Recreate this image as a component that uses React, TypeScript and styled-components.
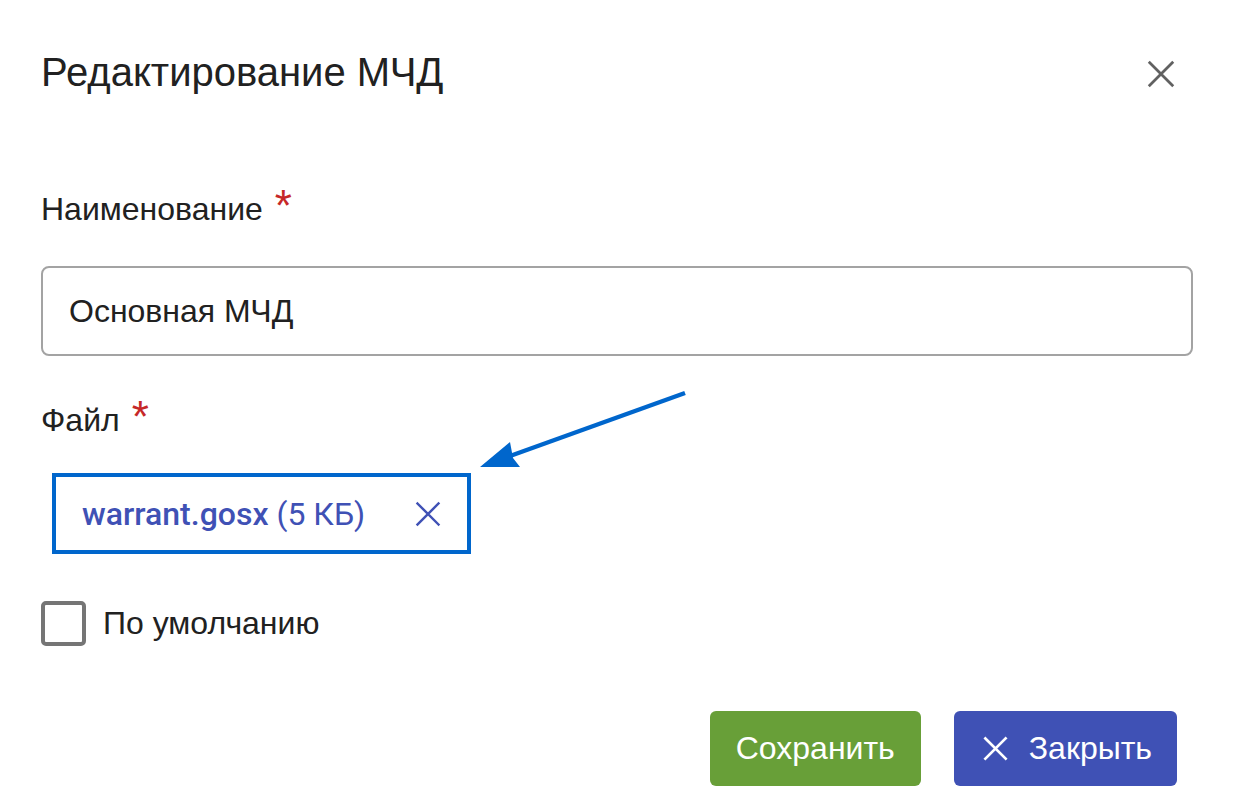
import React from 'react'
import styled, { createGlobalStyle } from 'styled-components'

const GlobalStyle = createGlobalStyle`
  html, body {
    margin: 0;
    padding: 0;
    background: #ffffff;
  }
  body {
    font-family: 'Liberation Sans', Arial, sans-serif;
    color: #212121;
  }
`

const Dialog = styled.div`
  position: relative;
  width: 1234px;
  height: 812px;
  box-sizing: border-box;
  padding: 48px 41px 0 41px;
  display: flex;
  flex-direction: column;
  background: #fff;
`

const Header = styled.div`
  display: flex;
  align-items: center;
  justify-content: space-between;
  height: 48px;
`

const Title = styled.h1`
  margin: 0;
  font-size: 40px;
  font-weight: 400;
  line-height: 48px;
  color: #212121;
`

const CloseButton = styled.button`
  width: 48px;
  height: 48px;
  margin-right: 8px;
  margin-top: 4px;
  padding: 0;
  border: none;
  background: transparent;
  display: flex;
  align-items: center;
  justify-content: center;
  cursor: pointer;
`

const Label = styled.label<{ top: number }>`
  display: block;
  margin-top: ${(p) => p.top}px;
  font-size: 32px;
  line-height: 38px;
  color: #212121;
`

const Required = styled.span`
  position: relative;
  top: 1px;
  color: #c62828;
  font-size: 44px;
  margin-left: 12px;
  line-height: 0;
`

const Input = styled.input`
  margin-top: 38px;
  height: 90px;
  box-sizing: border-box;
  width: 100%;
  padding: 0 26px;
  border: 2px solid #a3a3a3;
  border-radius: 8px;
  font-family: 'Liberation Sans', Arial, sans-serif;
  font-size: 32px;
  color: #212121;
  outline: none;
`

const FileChip = styled.div`
  margin-top: 34px;
  margin-left: 11px;
  width: 419px;
  height: 81px;
  box-sizing: border-box;
  border: 4px solid #0066cc;
  display: flex;
  align-items: center;
  padding: 0 24px 0 26px;
  gap: 49px;
  font-family: Roboto, 'Liberation Sans', sans-serif;
  font-size: 32px;
  color: #3f51b5;
`

const FileName = styled.span`
  font-weight: 500;
`

const FileSize = styled.span`
  font-weight: 400;
`

const RemoveFile = styled.span`
  display: flex;
  align-items: center;
`

const CheckRow = styled.label`
  margin-top: 47px;
  display: flex;
  align-items: center;
  gap: 17px;
  font-size: 32px;
  color: #212121;
`

const CheckBox = styled.span`
  width: 45px;
  height: 45px;
  box-sizing: border-box;
  border: 4px solid #757575;
  border-radius: 5px;
`

const Actions = styled.div`
  margin-top: 65px;
  padding-right: 16px;
  display: flex;
  justify-content: flex-end;
  gap: 33px;
`

const ActionButton = styled.button<{ tone: 'green' | 'blue' }>`
  height: 75px;
  padding: ${(p) => (p.tone === 'green' ? '0 26px' : '0 25px 0 28px')};
  border: none;
  border-radius: 6px;
  background: ${(p) => (p.tone === 'green' ? '#689f38' : '#3f51b5')};
  color: #fff;
  font-family: 'Liberation Sans', Arial, sans-serif;
  font-size: 32px;
  display: flex;
  align-items: center;
  gap: 20px;
  cursor: pointer;
`

const Arrow = styled.svg`
  position: absolute;
  left: 470px;
  top: 380px;
  overflow: visible;
`

const Cross = ({ size, color, width }: { size: number; color: string; width: number }) => (
  <svg width={size} height={size} viewBox="0 0 24 24">
    <path d="M3 3 L21 21 M21 3 L3 21" stroke={color} strokeWidth={width} strokeLinecap="square" fill="none" />
  </svg>
)

export default function App() {
  return (
    <>
      <GlobalStyle />
      <Dialog>
        <Header>
          <Title>Редактирование МЧД</Title>
          <CloseButton aria-label="Закрыть">
            <Cross size={30} color="#616161" width={2.2} />
          </CloseButton>
        </Header>

        <Label top={94}>
          Наименование<Required>*</Required>
        </Label>
        <Input defaultValue="Основная МЧД" />

        <Label top={45}>
          Файл<Required>*</Required>
        </Label>
        <FileChip>
          <span>
            <FileName>warrant.gosx</FileName> <FileSize>(5 КБ)</FileSize>
          </span>
          <RemoveFile>
            <Cross size={28} color="#3f51b5" width={2.1} />
          </RemoveFile>
        </FileChip>

        <CheckRow>
          <CheckBox />
          По умолчанию
        </CheckRow>

        <Actions>
          <ActionButton tone="green">Сохранить</ActionButton>
          <ActionButton tone="blue">
            <Cross size={27} color="#ffffff" width={2.4} />
            Закрыть
          </ActionButton>
        </Actions>

        <Arrow width="230" height="100">
          <line x1="215" y1="13" x2="40" y2="76" stroke="#0066cc" strokeWidth="4.5" />
          <polygon points="10,87 40,62 43,78 50,87" fill="#0066cc" />
        </Arrow>
      </Dialog>
    </>
  )
}
